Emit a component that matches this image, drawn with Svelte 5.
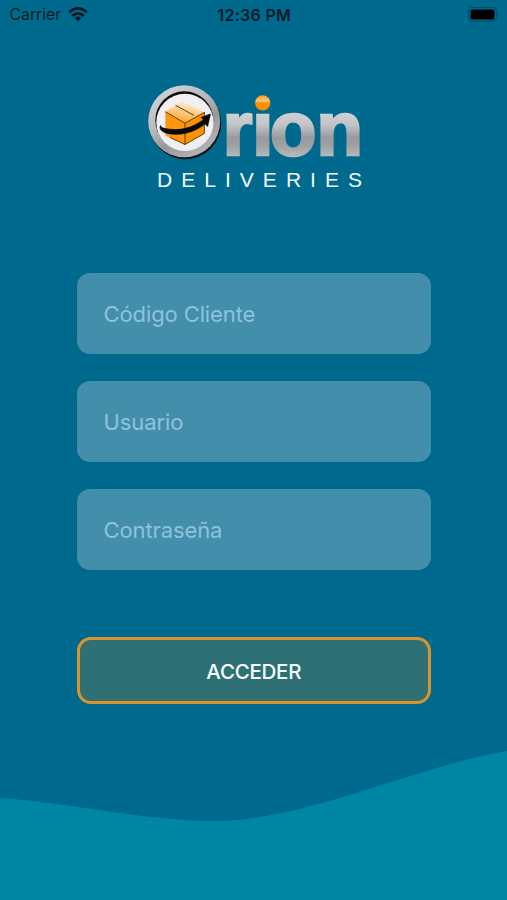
<script>
  const fields = [
    { name: 'client', label: 'Código Cliente', type: 'text' },
    { name: 'user', label: 'Usuario', type: 'text' },
    { name: 'password', label: 'Contraseña', type: 'password' }
  ];
</script>

<main class="screen">
  <header class="status">
    <div class="carrier">
      <span>Carrier</span>
      <svg width="20" height="15" viewBox="0 0 20 15" fill="none" stroke="#031820" stroke-width="2.8">
        <path d="M1.2 5.2Q10-2.5 18.8 5.2" />
        <path d="M4.3 8.9Q10 3.9 15.7 8.9" />
        <path d="M6.8 11Q10 8.2 13.2 11L10 14.3Z" fill="#031820" stroke="none" />
      </svg>
    </div>
    <div class="time">12:36 PM</div>
    <div class="battery">
      <svg width="34" height="16" viewBox="0 0 34 16">
        <rect x="1.5" y="0.4" width="28" height="14" rx="4" fill="none" stroke="#04506d" stroke-width="1.4" />
        <rect x="3.5" y="2.4" width="24" height="10" rx="2" fill="#000" />
        <path d="M31 5Q33 7.5 31 10Z" fill="#04506d" />
      </svg>
    </div>
  </header>

  <svg class="logo" width="230" height="120" viewBox="140 80 230 120" role="img" aria-label="Orion Deliveries">
    <defs>
      <linearGradient id="ring" x1="0.15" y1="0" x2="0.8" y2="1">
        <stop offset="0" stop-color="#d6d6d8" />
        <stop offset="0.4" stop-color="#b8b9bb" />
        <stop offset="0.65" stop-color="#96989a" />
        <stop offset="1" stop-color="#bcbcbe" />
      </linearGradient>
      <linearGradient id="metal" gradientUnits="userSpaceOnUse" x1="0" y1="114" x2="0" y2="157">
        <stop offset="0" stop-color="#cfd0d2" />
        <stop offset="0.25" stop-color="#c3c4c6" />
        <stop offset="0.55" stop-color="#999a9d" />
        <stop offset="0.75" stop-color="#a0a1a3" />
        <stop offset="1" stop-color="#b9babb" />
      </linearGradient>
      <linearGradient id="lid" x1="0.7" y1="0" x2="0.3" y2="1">
        <stop offset="0" stop-color="#fff0df" />
        <stop offset="0.5" stop-color="#ffc77e" />
        <stop offset="1" stop-color="#ffa02a" />
      </linearGradient>
      <linearGradient id="dot" x1="0" y1="0" x2="0" y2="1">
        <stop offset="0" stop-color="#ff9d20" />
        <stop offset="0.38" stop-color="#ffc477" />
        <stop offset="0.5" stop-color="#ff9200" />
        <stop offset="1" stop-color="#fa8c08" />
      </linearGradient>
      <clipPath id="stems">
        <rect x="220" y="112" width="145" height="50" />
      </clipPath>
    </defs>
    <circle cx="185.3" cy="123.3" r="35.9" fill="#101519" />
    <circle cx="184.2" cy="121.2" r="36" fill="url(#ring)" />
    <circle cx="184.3" cy="120.2" r="29" fill="#0d0d0f" />
    <circle cx="184.9" cy="122.4" r="28.6" fill="#f0f0f3" />
    <g stroke-linejoin="round">
      <path d="M165.3 111.7L181.7 101.5L204.3 112.3L185 123.3Z" fill="url(#lid)" />
      <path d="M165.3 111.7L185 123.3V144.5L165.3 135.5Z" fill="#ff970b" />
      <path d="M185 123.3L204.3 112.3V133.5L185 144.5Z" fill="#ff9200" />
      <path d="M165.3 111.7L185 123.3L204.3 112.3V133.5L185 144.5V123.3M175.5 105.3L194 115.4M185 144.5L170 137.5" fill="none" stroke="#4c2f08" stroke-width="0.9" />
    </g>
    <path d="M160.6 125.5C157.5 130.8 166 134.5 177 134.3C188.5 134 198.5 129.4 205 123.8L207.6 126.5L210.4 114L201 117.4L203.4 119.8C194 126.4 185 129.7 175.5 129.5C166 129.3 160.5 128 160.6 125.5Z" fill="#090909" stroke="#090909" stroke-width="0.7" />
    <g clip-path="url(#stems)">
      <text x="222.8 252.2 270 316.4" y="155.3" class="wordmark">rion</text>
    </g>
    <circle cx="262.7" cy="102.9" r="7.6" fill="url(#dot)" />
    <text x="157" y="187.3" class="tagline" textLength="205" lengthAdjust="spacing">DELIVERIES</text>
  </svg>

  <form class="login" onsubmit={(event) => event.preventDefault()}>
    {#each fields as field}
      <input name={field.name} type={field.type} placeholder={field.label} aria-label={field.label} />
    {/each}
    <button type="submit">ACCEDER</button>
  </form>

  <svg class="wave" width="507" height="150" viewBox="0 750 507 150" aria-hidden="true">
    <path d="M0 798C72 803 145 821 213 821C306 821 409 768 507 751V900H0Z" fill="#0086a5" />
  </svg>
</main>

<style>
  :global(body) {
    margin: 0;
    background: #00698e;
  }

  .screen {
    box-sizing: border-box;
    width: 507px;
    height: 900px;
    overflow: hidden;
    display: flex;
    flex-direction: column;
    background: #00698e;
    font-family: Inter, "Liberation Sans", sans-serif;
  }

  .status {
    display: grid;
    grid-template-columns: 1fr auto 1fr;
    align-items: center;
    height: 29px;
    padding: 0 6px 0 9.5px;
    box-sizing: border-box;
    color: #031c27;
    font-size: 15.8px;
  }

  .carrier {
    display: flex;
    align-items: center;
    gap: 7px;
  }

  .time {
    font-weight: 600;
    font-size: 16px;
    letter-spacing: 0.3px;
    margin-right: 2px;
  }

  .battery {
    display: flex;
    justify-content: flex-end;
  }

  .logo {
    display: block;
    flex: none;
    margin: 51px 0 0 140px;
  }

  .wordmark {
    font: bold 76px "Liberation Sans", Arial, sans-serif;
    fill: url(#metal);
    stroke: url(#metal);
    stroke-width: 2.7px;
  }

  .tagline {
    font: 21px "Liberation Sans", Arial, sans-serif;
    fill: #f2fbff;
  }

  .login {
    display: flex;
    flex-direction: column;
    gap: 27px;
    width: 354px;
    margin: 73px 0 0 77.3px;
  }

  input {
    box-sizing: border-box;
    width: 100%;
    height: 81px;
    padding: 0 26.3px;
    border: 0;
    border-radius: 13px;
    outline: none;
    background: #438eab;
    color: #fff;
    font: 22px Inter, "Liberation Sans", sans-serif;
    letter-spacing: -0.12px;
  }

  input::placeholder {
    color: #8dc3db;
    opacity: 1;
  }

  button {
    box-sizing: border-box;
    height: 67px;
    margin-top: 40px;
    padding: 2px 1px 0 0;
    border: 3px solid #d9942f;
    border-radius: 14px;
    background: #2f7074;
    color: #f4ffff;
    font: 500 20.5px Inter, "Liberation Sans", sans-serif;
    letter-spacing: -0.25px;
  }

  .wave {
    display: block;
    flex: none;
    margin-top: auto;
  }
</style>
